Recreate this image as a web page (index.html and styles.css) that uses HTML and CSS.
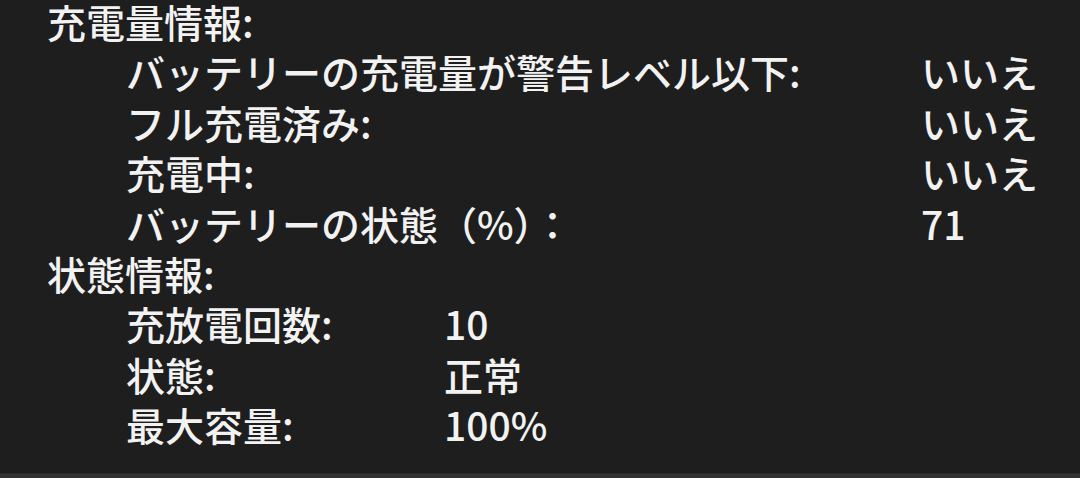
FILE: index.html
```html
<!DOCTYPE html>
<html lang="ja">
<head>
<meta charset="utf-8">
<link rel="stylesheet" href="styles.css">
</head>
<body>
<main class="panel">
  <section class="section">
    <div class="heading">充電量情報:</div>
    <div class="rows rows-wide">
      <div class="label">バッテリーの充電量が警告レベル以下:</div><div class="value">いいえ</div>
      <div class="label">フル充電済み:</div><div class="value">いいえ</div>
      <div class="label">充電中:</div><div class="value">いいえ</div>
      <div class="label">バッテリーの状態（%）：</div><div class="value">71</div>
    </div>
  </section>
  <section class="section">
    <div class="heading">状態情報:</div>
    <div class="rows rows-narrow">
      <div class="label">充放電回数:</div><div class="value">10</div>
      <div class="label">状態:</div><div class="value">正常</div>
      <div class="label">最大容量:</div><div class="value">100%</div>
    </div>
  </section>
</main>
<div class="bottom-bar"></div>
</body>
</html>
```
FILE: styles.css
```css
html, body {
  margin: 0;
  padding: 0;
  background: #1e1e1e;
}
body {
  width: 1080px;
  height: 478px;
  overflow: hidden;
  display: flex;
  flex-direction: column;
  font-family: "Noto Sans CJK JP", "Noto Sans", sans-serif;
  font-weight: 500;
  color: #f2f2f2;
  font-size: 39px;
  line-height: 50.4px;
}
.panel {
  flex: 1;
  margin-top: -4px;
  padding: 0 0 0 47px;
}
.heading {
  white-space: nowrap;
}
.rows {
  display: grid;
  padding-left: 79px;
  white-space: nowrap;
}
.rows-wide {
  grid-template-columns: 795px auto;
}
.rows-narrow {
  grid-template-columns: 318px auto;
}
.bottom-bar {
  height: 4px;
  border-top: 1px solid #2a2a2a;
  background: #333333;
}
```
